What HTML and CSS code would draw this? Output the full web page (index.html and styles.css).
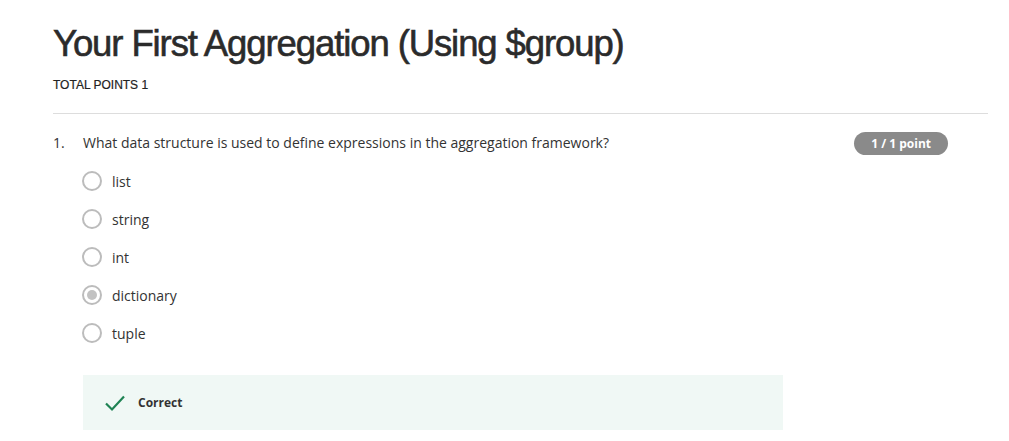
FILE: index.html
```html
<!DOCTYPE html>
<html>
<head>
<meta charset="utf-8">
<link rel="stylesheet" href="styles.css">
</head>
<body>
<div class="page">
  <h1 class="title">Your First Aggregation (Using $group)</h1>
  <div class="total">TOTAL POINTS 1</div>
  <hr class="divider">
  <div class="question">
    <div class="q-head">
      <span class="q-num">1.</span>
      <span class="q-text">What data structure is used to define expressions in the aggregation framework?</span>
      <span class="badge">1 / 1 point</span>
    </div>
    <ul class="options">
      <li class="option"><span class="radio"></span><span>list</span></li>
      <li class="option"><span class="radio"></span><span>string</span></li>
      <li class="option"><span class="radio"></span><span>int</span></li>
      <li class="option"><span class="radio checked"></span><span>dictionary</span></li>
      <li class="option"><span class="radio"></span><span>tuple</span></li>
    </ul>
    <div class="feedback">
      <svg class="check" width="22" height="18" viewBox="0 0 22 18"><path d="M2 9.5 L8 15.5 L20 2.5" fill="none" stroke="#1f8354" stroke-width="2.2"/></svg>
      <span class="fb-text">Correct</span>
    </div>
  </div>
</div>
</body>
</html>
```
FILE: styles.css
```css
html, body { margin: 0; padding: 0; background: #fff; }
body { font-family: "Open Sans", "Liberation Sans", sans-serif; color: #333; }
.page { padding: 22px 21px 0 53px; }
.title {
  margin: 0;
  font-family: "Liberation Sans", Arial, sans-serif;
  font-weight: normal;
  font-size: 36.5px;
  letter-spacing: -1.1px;
  line-height: 44px;
  color: #2b2b2b;
  -webkit-text-stroke: 0.6px #2b2b2b;
}
.total {
  margin-top: 12px;
  font-family: "Liberation Sans", Arial, sans-serif;
  font-size: 12px;
  letter-spacing: 0;
  line-height: 14px;
  color: #222;
  -webkit-text-stroke: 0.2px #222;
}
.divider { border: 0; border-top: 1px solid #ddd; margin: 21px 0 0 0; }
.question { padding-top: 19px; }
.q-head { display: flex; align-items: flex-start; font-size: 14px; line-height: 20px; color: #333; }
.q-num { width: 30px; }
.q-text { flex: 1; }
.badge {
  margin-right: 40px;
  margin-top: -1px;
  background: #8a8a8a;
  color: #fff;
  font-weight: bold;
  font-size: 12px;
  line-height: 23px;
  height: 23px;
  padding: 0 17px;
  border-radius: 12px;
}
.options { list-style: none; margin: 7px 0 0 29px; padding: 0; }
.option { display: flex; align-items: center; height: 38px; font-size: 14px; color: #333; }
.radio {
  width: 16px; height: 16px;
  border: 2px solid #bcbcbc;
  border-radius: 50%;
  margin-right: 10px;
  box-sizing: content-box;
  position: relative;
}
.radio.checked::after {
  content: "";
  position: absolute;
  left: 3px; top: 3px;
  width: 10px; height: 10px;
  border-radius: 50%;
  background: #c2c2c2;
}
.feedback {
  margin: 23px 0 0 30px;
  width: 700px;
  height: 55px;
  background: #f0f8f5;
  display: flex;
  align-items: center;
  padding-left: 21px;
  box-sizing: border-box;
}
.check { margin-right: 12px; }
.fb-text { font-size: 12px; font-weight: bold; color: #333; }
```
